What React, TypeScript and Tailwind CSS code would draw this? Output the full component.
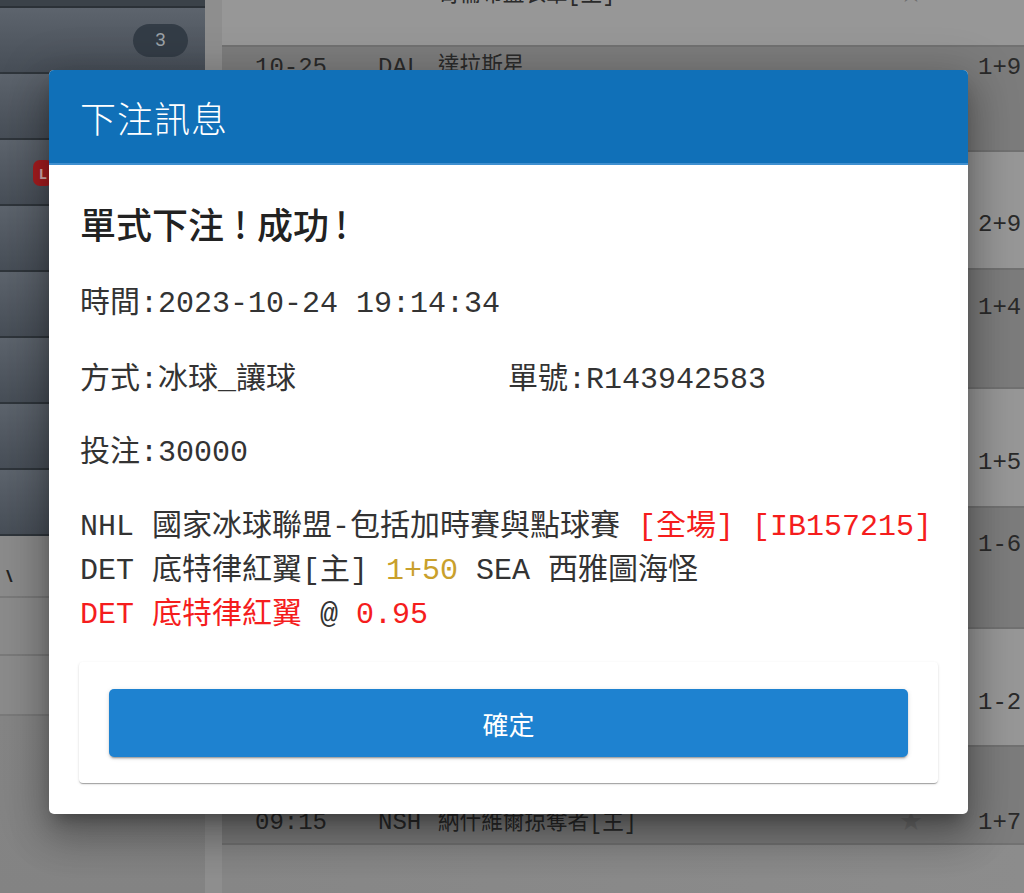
import React from 'react';

const sideRows = [0, 1, 2, 3, 4, 5, 6, 7];

const listRows = [
  { h: 47, dark: false, pt: -20, time: '', code: '', team: '哥倫布藍衣軍[主]', odds: '', star: true },
  { h: 105, dark: true, pt: 6, time: '10-25', code: 'DAL', team: '達拉斯星', odds: '1+9', star: false },
  { h: 118, dark: false, pt: 58, time: '', code: '', team: '', odds: '2+9', star: false },
  { h: 119, dark: true, pt: 23, time: '', code: '', team: '', odds: '1+4', star: false },
  { h: 119, dark: false, pt: 59, time: '', code: '', team: '', odds: '1+5', star: false },
  { h: 121, dark: true, pt: 22, time: '', code: '', team: '', odds: '1-6', star: false },
  { h: 118, dark: false, pt: 59, time: '', code: '', team: '', odds: '1-2', star: false },
  { h: 98, dark: true, pt: 61, time: '09:15', code: 'NSH', team: '納什維爾掠奪者[主]', odds: '1+7', star: true },
];

const BetDialog: React.FC = () => {
  return (
    <div className="absolute left-[49px] top-[70px] w-[919px] bg-white rounded-[5px] overflow-hidden shadow-[0_11px_15px_-7px_rgba(0,0,0,0.3),0_24px_38px_3px_rgba(0,0,0,0.2),0_9px_46px_8px_rgba(0,0,0,0.18)]">
      {/* header */}
      <div className="h-[95px] bg-[#1070b8] border-b-2 border-[#3f8fcf] px-[31px] flex items-center">
        <p className="text-[36px] leading-none text-white font-['Noto_Sans_CJK_TC','Noto_Sans',sans-serif] font-light tracking-[1px]">
          下注訊息
        </p>
      </div>

      {/* body */}
      <div className="px-[30px] pt-[36px] pb-[31px] text-[#333] font-['Liberation_Mono','Noto_Sans_CJK_TC',monospace] text-[30px]">
        <p className="pl-[1px] leading-[44px] text-[36px] font-medium text-[#222] font-['Noto_Sans_CJK_TC','Noto_Sans',sans-serif]">
          單式下注<span className="inline-block w-[33px] text-center">!</span>成功
          <span className="inline-block w-[25px] text-center">!</span>
        </p>
        <p className="pl-[1px] mt-[37px] leading-[44px]">時間:2023-10-24 19:14:34</p>
        <div className="pl-[1px] mt-[32px] leading-[44px] flex">
          <span className="w-[428px]">方式:冰球_讓球</span>
          <span>單號:R143942583</span>
        </div>
        <p className="pl-[1px] mt-[29px] leading-[44px]">投注:30000</p>

        <div className="pl-[1px] mt-[30px] leading-[44px]">
          <p className="whitespace-nowrap">
            NHL 國家冰球聯盟-包括加時賽與點球賽 <span className="text-[#f51d1d]">[全場]</span>{' '}
            <span className="text-[#f51d1d]">[IB157215]</span>
          </p>
          <p className="whitespace-nowrap">
            DET 底特律紅翼[主] <span className="text-[#c9a02c]">1+50</span> SEA 西雅圖海怪
          </p>
          <p className="whitespace-nowrap">
            <span className="text-[#f51d1d]">DET 底特律紅翼</span> @ <span className="text-[#f51d1d]">0.95</span>
          </p>
        </div>

        <div className="mt-[25px] bg-white rounded-[4px] px-[30px] pt-[27px] pb-[26px] shadow-[0_2px_1px_-1px_rgba(0,0,0,0.2),0_1px_1px_0_rgba(0,0,0,0.14),0_1px_3px_0_rgba(0,0,0,0.12)]">
          <button className="w-full h-[68px] rounded-[5px] bg-[#1e82d0] text-white text-[26px] font-normal font-['Noto_Sans_CJK_TC','Noto_Sans',sans-serif] shadow-[0_3px_1px_-2px_rgba(0,0,0,0.2),0_2px_2px_0_rgba(0,0,0,0.14),0_1px_5px_0_rgba(0,0,0,0.12)]">
            確定
          </button>
        </div>
      </div>
    </div>
  );
};

const App: React.FC = () => {
  return (
    <div className="relative w-[1024px] h-[893px] overflow-hidden bg-[#878787]">
      <div className="flex h-full">
        {/* sidebar */}
        <div className="w-[205px] flex flex-col">
          <div className="h-[8px] bg-[#3b4249] border-b-2 border-[#2b3137]" />
          {sideRows.map((i) => (
            <div
              key={i}
              className="relative h-[66px] bg-gradient-to-b from-[#5d646d] to-[#474e57] border-b-2 border-[#2f353b] flex items-center justify-end pr-[17px]"
            >
              {i === 0 && (
                <span className="w-[55px] h-[33px] rounded-full bg-[#333c46] text-[#9ca2a8] text-[19px] flex items-center justify-center font-['Roboto',sans-serif]">
                  3
                </span>
              )}
              {i === 2 && (
                <span className="absolute left-[33px] top-[20px] w-[20px] h-[26px] rounded-[7px] bg-[#a91d20] text-[#d8b0b0] text-[14px] font-bold flex items-center justify-center">
                  L
                </span>
              )}
            </div>
          ))}
          <div className="h-[62px] bg-[#8b8b8b] border-b-2 border-[#7a7a7a] pl-[6px] pt-[28px]">
            <span className="text-[#222] text-[16px] leading-none font-bold">\</span>
          </div>
          <div className="h-[58px] bg-[#8b8b8b] border-b-2 border-[#7a7a7a]" />
          <div className="h-[60px] bg-[#8b8b8b] border-b-2 border-[#7a7a7a]" />
          <div className="flex-1 bg-gradient-to-b from-[#858585] to-[#838383]" />
        </div>

        <div className="w-[17px] bg-[#8e8e8e]" />

        {/* match list */}
        <div className="flex-1 flex flex-col font-['Liberation_Mono','Noto_Sans_CJK_TC',monospace] text-[24px] text-[#2a2a2a]">
          {listRows.map((r, i) => (
            <div
              key={i}
              style={{ height: r.h }}
              className={`relative overflow-hidden border-b-2 border-[#717171] ${r.dark ? 'bg-[#7c7c7c]' : 'bg-[#979797]'}`}
            >
              <div style={{ marginTop: r.pt }} className="flex items-center h-[30px] leading-[30px] whitespace-nowrap">
                <span className="w-[33px]" />
                <span className="w-[123px]">{r.time}</span>
                <span className="w-[60px]">{r.code}</span>
                <span className="w-[462px] scale-x-[0.9] origin-left">{r.team}</span>
                <span className="w-[78px] text-[#6e6e6e] text-[22px]">{r.star ? '★' : ''}</span>
                <span>{r.odds}</span>
              </div>
            </div>
          ))}
          <div className="flex-1 bg-gradient-to-r from-[#868686] to-[#8c8c8c]" />
        </div>
      </div>

      <BetDialog />
    </div>
  );
};

export default App;
